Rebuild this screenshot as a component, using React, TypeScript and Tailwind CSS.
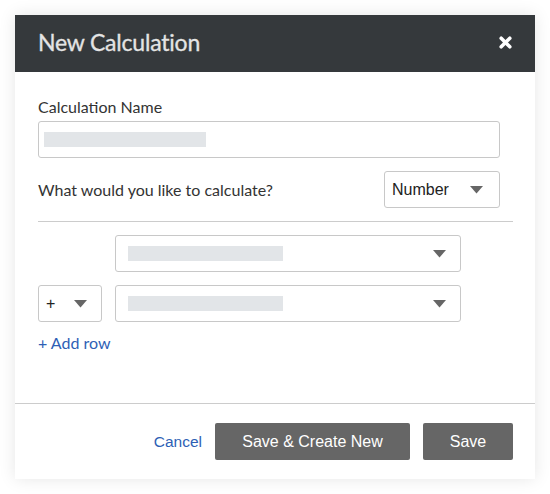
import React from "react";

const Caret = () => (
  <svg width="13" height="8" viewBox="0 0 13 8" className="block">
    <path d="M0 0 L13 0 L6.5 7.5 Z" fill="#666666" />
  </svg>
);

export default function App() {
  return (
    <div className="w-[550px] h-[494px] bg-white pt-[15px] pl-[15px]">
      <div className="w-[520px] h-[464px] flex flex-col bg-white shadow-[0_0_16px_rgba(0,0,0,0.10)]">
        <div className="h-[57px] bg-[#35393c] flex items-center justify-between pl-[23px] pr-[23px]">
          <span className="text-[23px] text-[#e4e4e4] font-['Lato',sans-serif] leading-[26px] -mt-[3px] tracking-[-0.2px] [-webkit-text-stroke:0.3px_#e4e4e4]">
            New Calculation
          </span>
          <svg width="13" height="13" viewBox="0 0 13 13" className="block -mt-[2px]">
            <path d="M2.2 2.2 L10.8 10.8 M10.8 2.2 L2.2 10.8" stroke="#ffffff" strokeWidth="3.6" strokeLinecap="round" />
          </svg>
        </div>
        <div className="flex-1 pl-[23px] pr-[22px] pt-[26px] font-['Lato',sans-serif] text-[#333333]">
          <div className="text-[16px] leading-[18px]">Calculation Name</div>
          <div className="mt-[5px] w-[462px] h-[37px] border border-[#c8c8c8] rounded-[3px] pl-[5px] pt-[10px]">
            <div className="w-[162px] h-[15px] bg-[#e2e5e8]" />
          </div>
          <div className="mt-[13px] w-[462px] flex items-center justify-between">
            <span className="text-[16px] leading-[18px]">What would you like to calculate?</span>
            <div className="w-[116px] h-[37px] border border-[#c8c8c8] rounded-[3px] flex items-center justify-between pl-[7px] pr-[16px] font-['Liberation_Sans',Arial,sans-serif] text-[16px] text-[#222222]">
              <span>Number</span>
              <Caret />
            </div>
          </div>
          <div className="mt-[13px] border-t border-[#cccccc]" />
          <div className="mt-[13px] ml-[77px] w-[346px] h-[37px] border border-[#c8c8c8] rounded-[3px] flex items-center justify-between pl-[12px] pr-[14px]">
            <div className="w-[155px] h-[15px] bg-[#e2e5e8]" />
            <Caret />
          </div>
          <div className="mt-[13px] flex gap-[13px]">
            <div className="w-[64px] h-[37px] border border-[#c8c8c8] rounded-[3px] flex items-center justify-between pl-[7px] pr-[14px] font-['Liberation_Sans',Arial,sans-serif] text-[16px] text-[#222222]">
              <span>+</span>
              <Caret />
            </div>
            <div className="w-[346px] h-[37px] border border-[#c8c8c8] rounded-[3px] flex items-center justify-between pl-[12px] pr-[14px]">
              <div className="w-[155px] h-[15px] bg-[#e2e5e8]" />
              <Caret />
            </div>
          </div>
          <div className="mt-[12px] text-[16px] leading-[18px] text-[#2e5fb5]">+ Add row</div>
        </div>
        <div className="border-t border-[#cccccc] pt-[19px] pb-[19px] pr-[22px] flex justify-end items-center gap-[13px] font-['Liberation_Sans',Arial,sans-serif]">
          <span className="text-[15.5px] text-[#2e5fb5]">Cancel</span>
          <div className="w-[195px] h-[37px] bg-[#666666] rounded-[2px] text-white text-[16px] flex items-center justify-center">
            Save &amp; Create New
          </div>
          <div className="w-[90px] h-[37px] bg-[#666666] rounded-[2px] text-white text-[16px] flex items-center justify-center">
            Save
          </div>
        </div>
      </div>
    </div>
  );
}
